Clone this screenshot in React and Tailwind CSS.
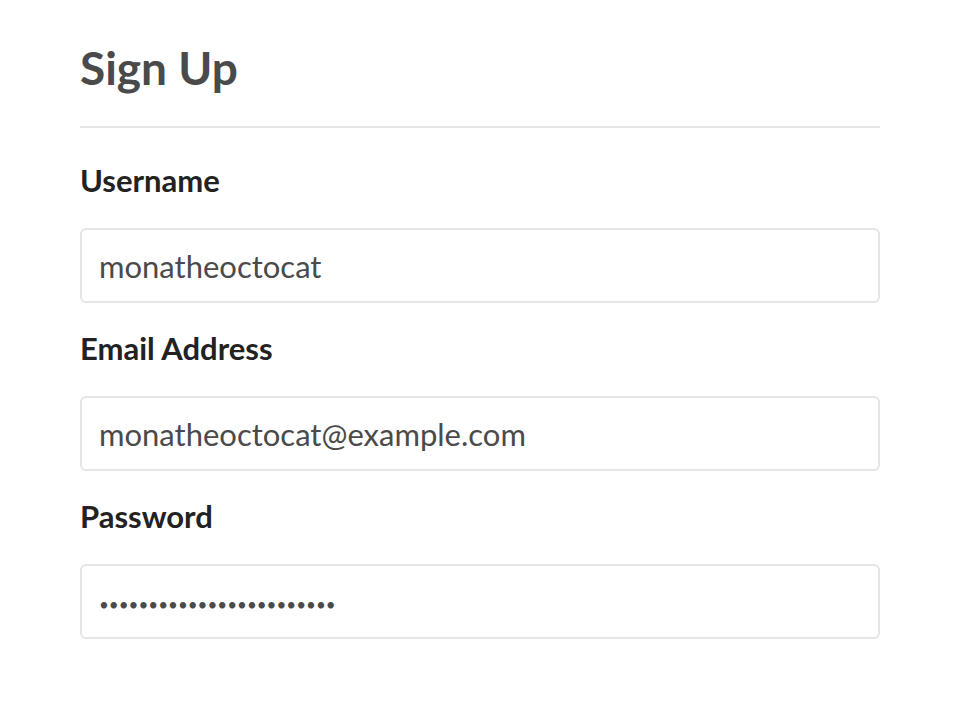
import React from "react";

function Field({ label, value, password = false }) {
  return (
    <div className="flex flex-col">
      <label className="mt-[30px] block text-[31px] font-bold leading-[30px] text-[#222]">{label}</label>
      <input
        readOnly
        type="text"
        value={value}
        className={
          "mt-[33px] h-[75px] w-full rounded-[6px] border-2 border-[#e5e5e5] bg-white px-[17px] text-[#4a4a4a] outline-none " +
          (password ? "text-[17px] pt-[6px]" : "text-[31px]")
        }
        style={{ fontFamily: "Lato, sans-serif" }}
      />
    </div>
  );
}

export default function App() {
  return (
    <div className="min-h-[701px] bg-white" style={{ fontFamily: "Lato, sans-serif" }}>
      <div className="mx-auto w-[800px] pt-[40px]">
        <h1 className="border-b-2 border-[#e5e5e5] pb-[30px] text-[46px] font-bold leading-[56px] text-[#4a4a4a]">Sign Up</h1>
        <div className="pt-[7px]">
          <Field label="Username" value="monatheoctocat" />
          <Field label="Email Address" value="monatheoctocat@example.com" />
          <Field label="Password" value="••••••••••••••••••••••••" password />
        </div>
      </div>
    </div>
  );
}
